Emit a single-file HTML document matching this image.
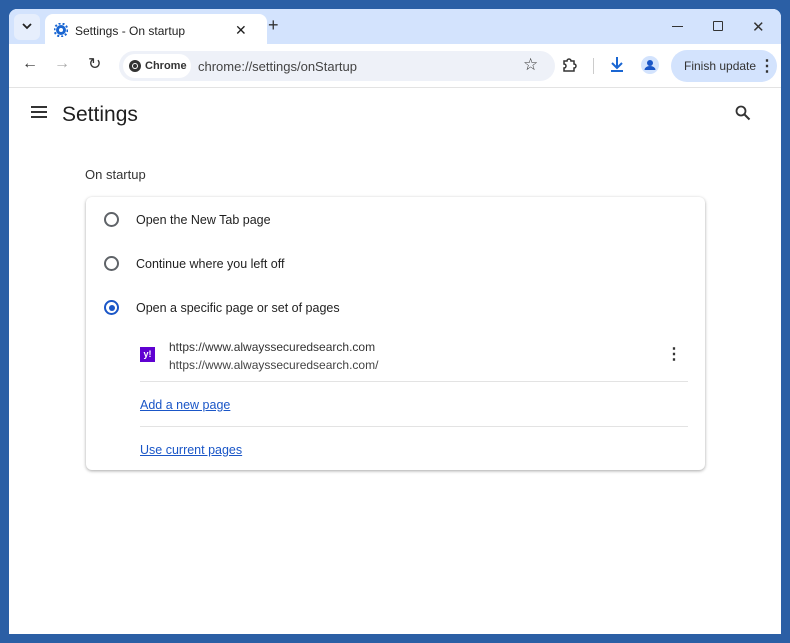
<!DOCTYPE html>
<html><head><style>
*{margin:0;padding:0;box-sizing:border-box}
body{width:790px;height:643px;background:#2b5fa5;font-family:"Liberation Sans",sans-serif;position:relative;overflow:hidden}
.win{position:absolute;left:9px;top:9px;width:772px;height:625px;background:#fff;border-radius:8px 8px 0 0;overflow:hidden}
.strip{position:absolute;left:0;top:0;width:100%;height:35px;background:#d3e3fd}
.tab{position:absolute;left:36px;top:5px;width:222px;height:32px;background:#fff;border-radius:8px 8px 0 0;font-size:12px;color:#1f1f1f}
.tb{position:absolute;top:35px;left:0;width:100%;height:44px;background:#fff;border-bottom:1px solid #e3e3e3}
.omni{position:absolute;left:110px;top:7px;width:436px;height:30px;background:#eef1f8;border-radius:15px}
.chip{position:absolute;left:4px;top:3px;height:24px;width:68px;background:#fff;border-radius:12px;font-size:11px;font-weight:bold;color:#333}
.fin{position:absolute;left:662px;top:6px;width:106px;height:32px;background:#d3e3fd;border-radius:16px;font-size:12px;color:#333}
.t{position:absolute;white-space:nowrap}
.card{position:absolute;left:77px;top:188px;width:619px;height:273px;background:#fff;border-radius:6px;box-shadow:0 1px 3px rgba(0,0,0,.35)}
.r{position:absolute;left:18px;width:15px;height:15px;border:2px solid #5f6368;border-radius:50%}
.lbl{font-size:12.5px;color:#1f1f1f}
.link{font-size:12.5px;color:#1a56c7;text-decoration:underline}
</style></head><body>
<div class="win">
 <div class="strip">
  <div style="position:absolute;left:5px;top:5px;width:26px;height:26px;background:#e6eefc;border-radius:6px"></div>
  <svg class="t" style="left:13px;top:13px" width="10" height="8"><path d="M1 2l4 4 4-4" stroke="#222" stroke-width="1.8" fill="none"/></svg>
  <div class="tab">
   <svg class="t" style="left:9px;top:9px" width="14" height="14" viewBox="0 0 14 14"><circle cx="7" cy="7" r="5" fill="#1a66d2"/><circle cx="7" cy="7" r="6.5" fill="none" stroke="#1a66d2" stroke-width="2" stroke-dasharray="2 2"/><circle cx="7" cy="7" r="2" fill="#fff"/></svg>
   <span class="t" style="left:30px;top:10px">Settings - On startup</span>
   <span class="t" style="left:190px;top:8px;font-size:14px">✕</span>
  </div>
  <span class="t" style="left:259px;top:6px;font-size:18px;color:#333">+</span>
  <div class="t" style="left:663px;top:17px;width:11px;height:1px;background:#333"></div>
  <div class="t" style="left:704px;top:12px;width:10px;height:10px;border:1.5px solid #333;border-radius:1px"></div>
  <span class="t" style="left:743px;top:9px;font-size:15px;color:#333">✕</span>
 </div>
 <div class="tb">
  <span class="t" style="left:13px;top:11px;font-size:16px;color:#333">←</span>
  <span class="t" style="left:45px;top:11px;font-size:16px;color:#aaa">→</span>
  <span class="t" style="left:79px;top:10px;font-size:16px;color:#333">↻</span>
  <div class="omni">
   <div class="chip"><svg class="t" style="left:5px;top:5px" width="14" height="14" viewBox="0 0 14 14"><circle cx="7" cy="7" r="6" fill="#333"/><circle cx="7" cy="7" r="3" fill="#fff"/><circle cx="7" cy="7" r="2" fill="#333"/></svg><span class="t" style="left:22px;top:6px">Chrome</span></div>
   <span class="t" style="left:79px;top:8px;font-size:13px;color:#444">chrome://settings/onStartup</span>
   <span class="t" style="left:404px;top:4px;font-size:17px;color:#333">☆</span>
  </div>
  <svg class="t" style="left:552px;top:13px" width="16" height="16" viewBox="0 0 16 16"><path d="M3 4h3a2 2 0 014 0h3v3a2 2 0 010 4v3H3v-3a2 2 0 000-4z" fill="none" stroke="#333" stroke-width="1.5"/></svg>
  <div class="t" style="left:584px;top:14px;width:1px;height:16px;background:#ccc"></div>
  <svg class="t" style="left:600px;top:12px" width="16" height="18" viewBox="0 0 16 18"><path d="M8 1v10M3 7l5 5 5-5M2 15h12" stroke="#1a66d2" stroke-width="2" fill="none"/></svg>
  <svg class="t" style="left:632px;top:12px" width="18" height="18" viewBox="0 0 18 18"><circle cx="9" cy="9" r="9" fill="#d3e3fd"/><circle cx="9" cy="7" r="3" fill="#1a56c7"/><path d="M3.5 14a5.5 4 0 0111 0z" fill="#1a56c7"/></svg>
  <div class="fin"><span class="t" style="left:13px;top:9px">Finish update</span><span class="t" style="left:88px;top:6px;font-size:16px;font-weight:bold">⋮</span></div>
 </div>
 <div class="t" style="left:22px;top:97px;width:16px;height:2px;background:#333;box-shadow:0 5px #333,0 10px #333"></div>
 <span class="t" style="left:53px;top:94px;font-size:21px;color:#1f1f1f">Settings</span>
 <svg class="t" style="left:726px;top:96px" width="16" height="16" viewBox="0 0 16 16"><circle cx="6" cy="6" r="4.5" stroke="#333" stroke-width="1.8" fill="none"/><path d="M9.5 9.5l5 5" stroke="#333" stroke-width="2"/></svg>
 <span class="t" style="left:76px;top:158px;font-size:13px;color:#333">On startup</span>
 <div class="card">
  <div class="r" style="top:15px"></div><span class="t lbl" style="left:50px;top:16px">Open the New Tab page</span>
  <div class="r" style="top:59px"></div><span class="t lbl" style="left:50px;top:60px">Continue where you left off</span>
  <div class="r" style="top:103px;border-color:#1a56c7"><div style="position:absolute;left:2.5px;top:2.5px;width:6px;height:6px;background:#1a56c7;border-radius:50%"></div></div><span class="t lbl" style="left:50px;top:104px">Open a specific page or set of pages</span>
  <div class="t" style="left:54px;top:150px;width:15px;height:15px;background:#5f01d1;color:#fff;font-size:9px;font-weight:bold;text-align:center;line-height:15px">y!</div>
  <span class="t" style="left:83px;top:143px;font-size:12px;color:#333">https://www.alwayssecuredsearch.com</span>
  <span class="t" style="left:83px;top:161px;font-size:12px;color:#444">https://www.alwayssecuredsearch.com/</span>
  <span class="t" style="left:580px;top:147px;font-size:16px;font-weight:bold;color:#333">⋮</span>
  <div class="t" style="left:54px;top:184px;width:548px;height:1px;background:#e3e3e3"></div>
  <span class="t link" style="left:54px;top:201px">Add a new page</span>
  <div class="t" style="left:54px;top:229px;width:548px;height:1px;background:#e3e3e3"></div>
  <span class="t link" style="left:54px;top:246px">Use current pages</span>
 </div>
</div>
</body></html>
